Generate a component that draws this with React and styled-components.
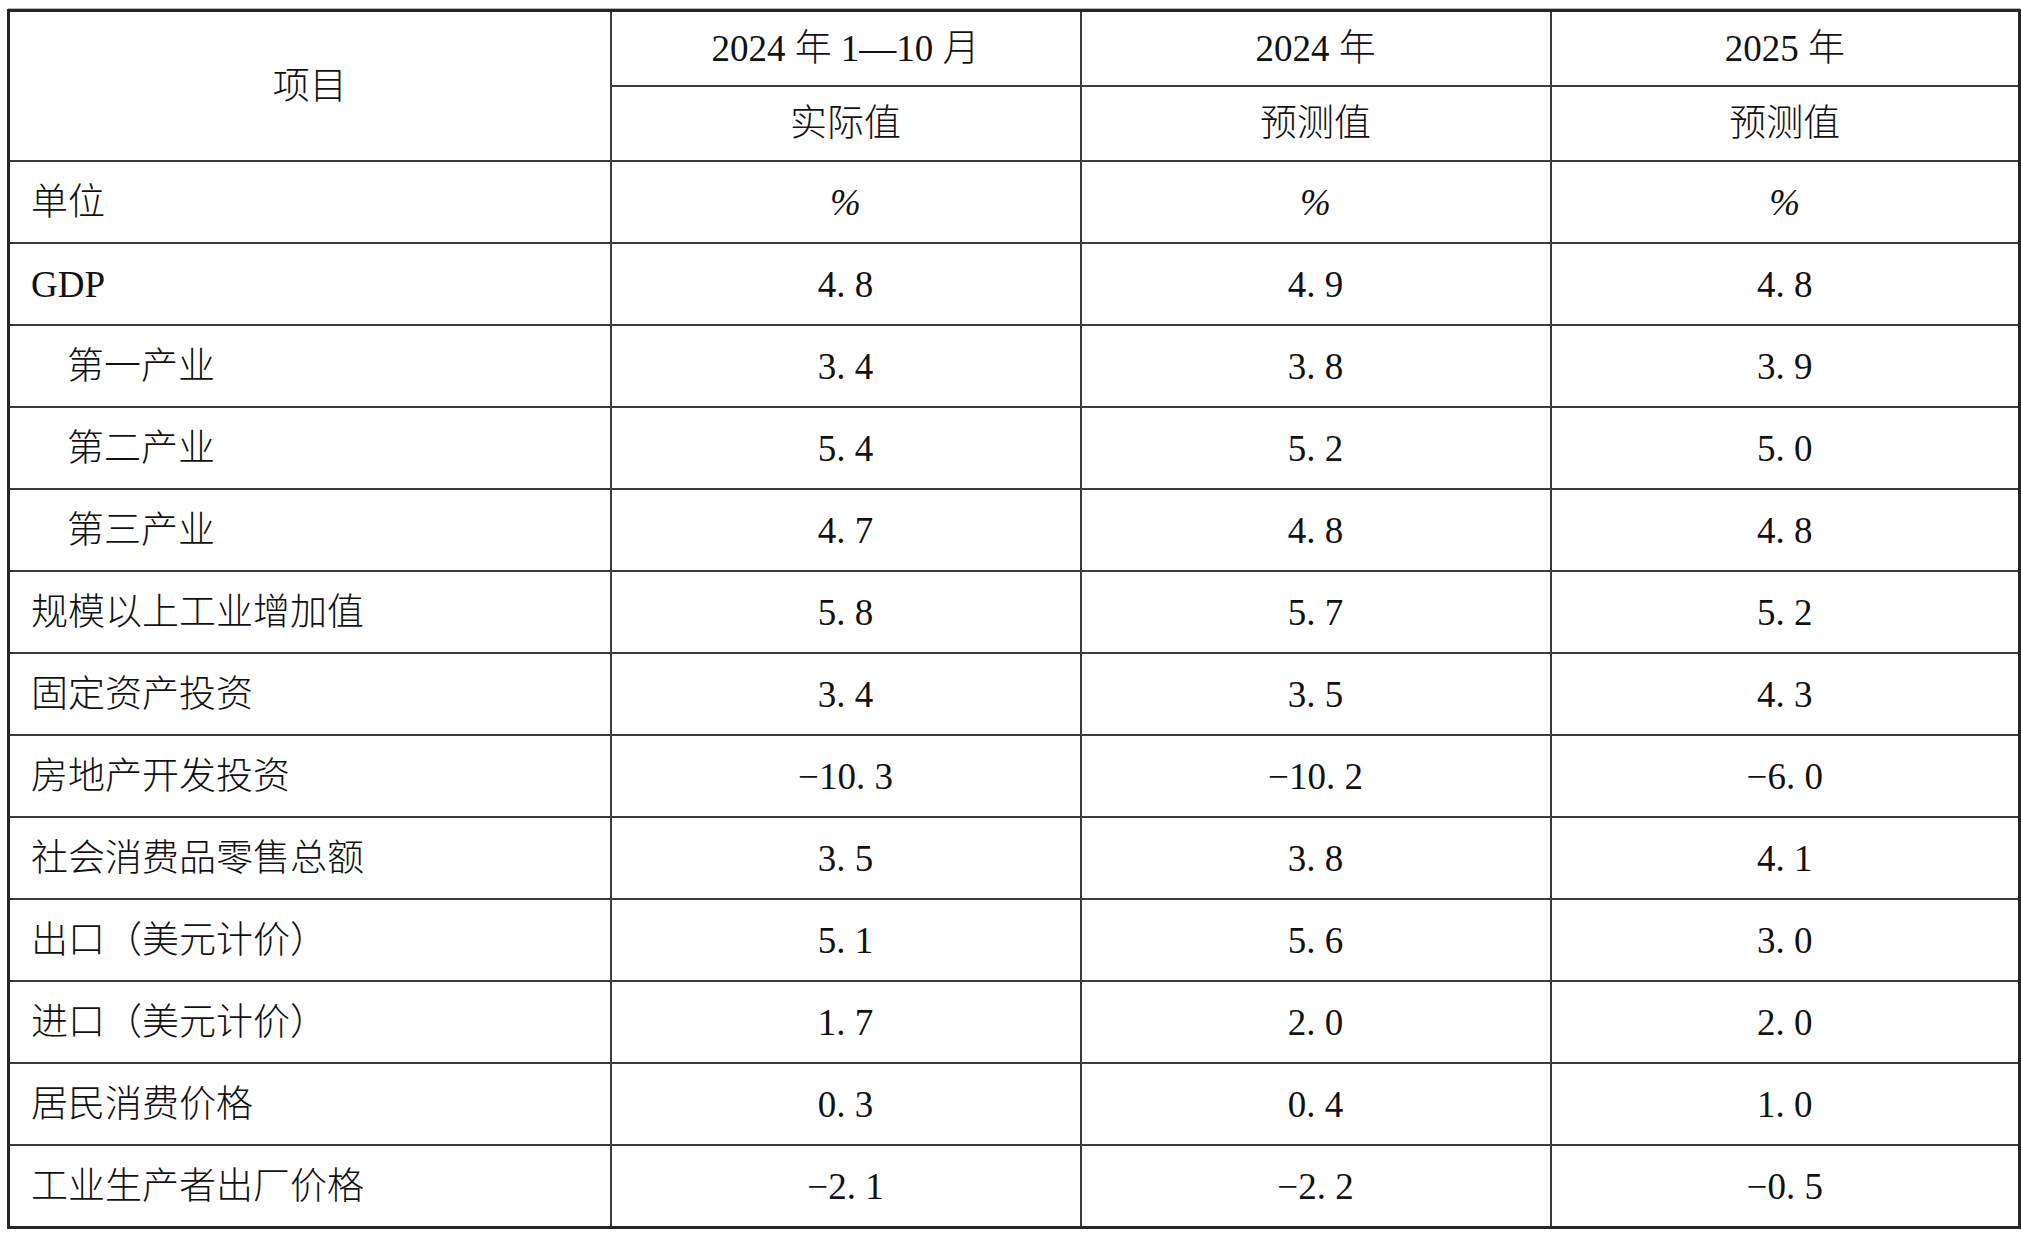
import React from "react";
import styled, { createGlobalStyle } from "styled-components";

const GlobalStyle = createGlobalStyle`
  html, body {
    margin: 0;
    padding: 0;
    background: #ffffff;
  }
  body {
    font-family: "Liberation Serif", "Noto Sans CJK SC", serif;
    color: #111111;
  }
`;

const Page = styled.div`
  padding: 9px 0 0 7px;
`;

const Table = styled.table`
  width: 2011px;
  border-collapse: collapse;
  table-layout: fixed;
  border: 3px solid #262626;
  box-shadow: 0 -2px 0 -1px #b4b4b4;
  font-family: "Liberation Serif", "Noto Sans CJK SC", serif;
  font-size: 37px;
  font-weight: 300;
  color: #111111;
`;

const HeadCell = styled.td`
  border: 2px solid #3a3a3a;
  height: 73px;
  padding: 0;
  text-align: center;
  vertical-align: middle;
  line-height: 1;
`;

const LabelCell = styled.td`
  border: 2px solid #3a3a3a;
  height: 80px;
  padding: 0 0 0 ${(props) => (props.$indent ? 57 : 21)}px;
  text-align: left;
  vertical-align: middle;
  line-height: 1;
  white-space: nowrap;
`;

const ValueCell = styled.td`
  border: 2px solid #3a3a3a;
  height: 80px;
  padding: 0;
  text-align: center;
  vertical-align: middle;
  line-height: 1;
  white-space: pre;
  font-style: ${(props) => (props.$unit ? "italic" : "normal")};
`;

const rows = [
  { label: "单位", unit: true, values: ["%", "%", "%"] },
  { label: "GDP", values: ["4. 8", "4. 9", "4. 8"] },
  { label: "第一产业", indent: true, values: ["3. 4", "3. 8", "3. 9"] },
  { label: "第二产业", indent: true, values: ["5. 4", "5. 2", "5. 0"] },
  { label: "第三产业", indent: true, values: ["4. 7", "4. 8", "4. 8"] },
  { label: "规模以上工业增加值", values: ["5. 8", "5. 7", "5. 2"] },
  { label: "固定资产投资", values: ["3. 4", "3. 5", "4. 3"] },
  { label: "房地产开发投资", values: ["−10. 3", "−10. 2", "−6. 0"] },
  { label: "社会消费品零售总额", values: ["3. 5", "3. 8", "4. 1"] },
  { label: "出口（美元计价）", values: ["5. 1", "5. 6", "3. 0"] },
  { label: "进口（美元计价）", values: ["1. 7", "2. 0", "2. 0"] },
  { label: "居民消费价格", values: ["0. 3", "0. 4", "1. 0"] },
  { label: "工业生产者出厂价格", values: ["−2. 1", "−2. 2", "−0. 5"] },
];

const App = () => {
  return (
    <Page>
      <GlobalStyle />
      <Table>
        <colgroup>
          <col style={{ width: "602px" }} />
          <col style={{ width: "470px" }} />
          <col style={{ width: "470px" }} />
          <col style={{ width: "469px" }} />
        </colgroup>
        <thead>
          <tr>
            <HeadCell rowSpan={2}>项目</HeadCell>
            <HeadCell>2024 年 1—10 月</HeadCell>
            <HeadCell>2024 年</HeadCell>
            <HeadCell>2025 年</HeadCell>
          </tr>
          <tr>
            <HeadCell>实际值</HeadCell>
            <HeadCell>预测值</HeadCell>
            <HeadCell>预测值</HeadCell>
          </tr>
        </thead>
        <tbody>
          {rows.map((row) => (
            <tr key={row.label}>
              <LabelCell $indent={row.indent}>{row.label}</LabelCell>
              {row.values.map((v, i) => (
                <ValueCell key={i} $unit={row.unit}>
                  {v}
                </ValueCell>
              ))}
            </tr>
          ))}
        </tbody>
      </Table>
    </Page>
  );
};

export default App;
